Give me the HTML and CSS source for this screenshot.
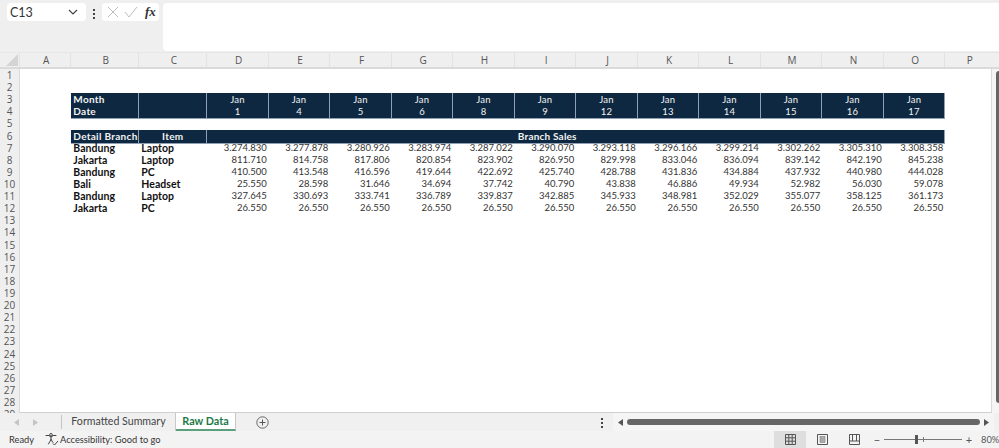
FILE: index.html
```html
<!DOCTYPE html>
<html lang="en">
<head>
<meta charset="utf-8">
<title>Raw Data</title>
<link rel="stylesheet" href="styles.css">
</head>
<body>
<div class="app">
  <div class="formula-bar">
    <div class="name-box"><span>C13</span>
      <svg width="10" height="6" viewBox="0 0 10 6"><path d="M1 1l4 4 4-4" fill="none" stroke="#444" stroke-width="1.2"/></svg>
    </div>
    <div class="dots"><i></i><i></i><i></i></div>
    <div class="fx-box">
      <svg width="12" height="12" viewBox="0 0 12 12"><path d="M1 1l10 10M11 1L1 11" stroke="#bdbdbd" stroke-width="1" fill="none"/></svg>
      <svg width="14" height="12" viewBox="0 0 14 12"><path d="M1 6l4 5 8-10" stroke="#bdbdbd" stroke-width="1" fill="none"/></svg>
      <span class="fx">fx</span>
    </div>
    <div class="formula-input"></div>
  </div>
  <div class="col-head">
    <div class="corner"><svg width="12" height="12" viewBox="0 0 12 12"><path d="M12 0v12H0z" fill="#d4d4d4"/></svg></div>
    <div class="col-a">A</div><div class="col-b">B</div><div class="col-b">C</div>
    <div class="col-d">D</div><div class="col-d">E</div><div class="col-d">F</div><div class="col-d">G</div><div class="col-d">H</div><div class="col-d">I</div><div class="col-d">J</div><div class="col-d">K</div><div class="col-d">L</div><div class="col-d">M</div><div class="col-d">N</div><div class="col-d">O</div>
    <div class="col-p">P</div>
  </div>
  <div class="body">
    <div class="row-head">
      <div>1</div><div>2</div><div>3</div><div>4</div><div>5</div><div>6</div><div>7</div><div>8</div><div>9</div><div>10</div><div>11</div><div>12</div><div>13</div><div>14</div><div>15</div><div>16</div><div>17</div><div>18</div><div>19</div><div>20</div><div>21</div><div>22</div><div>23</div><div>24</div><div>25</div><div>26</div><div>27</div><div>28</div><div>29</div>
    </div>
    <div class="sheet">
      <div class="blank"></div><div class="blank"></div>
      <div class="row head">
        <div class="b h">Month</div><div class="b h"></div>
        <div class="m">Jan</div><div class="m">Jan</div><div class="m">Jan</div><div class="m">Jan</div><div class="m">Jan</div><div class="m">Jan</div><div class="m">Jan</div><div class="m">Jan</div><div class="m">Jan</div><div class="m">Jan</div><div class="m">Jan</div><div class="m">Jan</div>
      </div>
      <div class="row head">
        <div class="b h">Date</div><div class="b h"></div>
        <div class="m">1</div><div class="m">4</div><div class="m">5</div><div class="m">6</div><div class="m">8</div><div class="m">9</div><div class="m">12</div><div class="m">13</div><div class="m">14</div><div class="m">15</div><div class="m">16</div><div class="m">17</div>
      </div>
      <div class="blank"></div>
      <div class="row head">
        <div class="b h">Detail Branch</div><div class="b h ctr">Item</div><div class="span">Branch Sales</div>
      </div>
      <div class="row"><div class="b">Bandung</div><div class="b">Laptop</div><div class="n">3.274.830</div><div class="n">3.277.878</div><div class="n">3.280.926</div><div class="n">3.283.974</div><div class="n">3.287.022</div><div class="n">3.290.070</div><div class="n">3.293.118</div><div class="n">3.296.166</div><div class="n">3.299.214</div><div class="n">3.302.262</div><div class="n">3.305.310</div><div class="n">3.308.358</div></div>
      <div class="row"><div class="b">Jakarta</div><div class="b">Laptop</div><div class="n">811.710</div><div class="n">814.758</div><div class="n">817.806</div><div class="n">820.854</div><div class="n">823.902</div><div class="n">826.950</div><div class="n">829.998</div><div class="n">833.046</div><div class="n">836.094</div><div class="n">839.142</div><div class="n">842.190</div><div class="n">845.238</div></div>
      <div class="row"><div class="b">Bandung</div><div class="b">PC</div><div class="n">410.500</div><div class="n">413.548</div><div class="n">416.596</div><div class="n">419.644</div><div class="n">422.692</div><div class="n">425.740</div><div class="n">428.788</div><div class="n">431.836</div><div class="n">434.884</div><div class="n">437.932</div><div class="n">440.980</div><div class="n">444.028</div></div>
      <div class="row"><div class="b">Bali</div><div class="b">Headset</div><div class="n">25.550</div><div class="n">28.598</div><div class="n">31.646</div><div class="n">34.694</div><div class="n">37.742</div><div class="n">40.790</div><div class="n">43.838</div><div class="n">46.886</div><div class="n">49.934</div><div class="n">52.982</div><div class="n">56.030</div><div class="n">59.078</div></div>
      <div class="row"><div class="b">Bandung</div><div class="b">Laptop</div><div class="n">327.645</div><div class="n">330.693</div><div class="n">333.741</div><div class="n">336.789</div><div class="n">339.837</div><div class="n">342.885</div><div class="n">345.933</div><div class="n">348.981</div><div class="n">352.029</div><div class="n">355.077</div><div class="n">358.125</div><div class="n">361.173</div></div>
      <div class="row"><div class="b">Jakarta</div><div class="b">PC</div><div class="n">26.550</div><div class="n">26.550</div><div class="n">26.550</div><div class="n">26.550</div><div class="n">26.550</div><div class="n">26.550</div><div class="n">26.550</div><div class="n">26.550</div><div class="n">26.550</div><div class="n">26.550</div><div class="n">26.550</div><div class="n">26.550</div></div>
    </div>
    <div class="vscroll">
      <svg width="7" height="5" viewBox="0 0 7 5"><path d="M3.5 0L7 5H0z" fill="#666"/></svg>
      <div class="vthumb"></div>
    </div>
  </div>
  <div class="tabs">
    <div class="nav">
      <svg width="5" height="7" viewBox="0 0 5 7"><path d="M5 0v7L0 3.5z" fill="#c4c4c4"/></svg>
      <svg width="5" height="7" viewBox="0 0 5 7"><path d="M0 0v7l5-3.5z" fill="#c4c4c4"/></svg>
    </div>
    <div class="tab">Formatted Summary</div>
    <div class="tab active">Raw Data</div>
    <div class="add"><svg width="13" height="13" viewBox="0 0 13 13"><circle cx="6.5" cy="6.5" r="5.7" fill="none" stroke="#666"/><path d="M6.5 3.5v6M3.5 6.5h6" stroke="#555"/></svg></div>
    <div class="dots tab-dots"><i></i><i></i><i></i></div>
    <div class="hscroll">
      <svg width="5" height="7" viewBox="0 0 5 7"><path d="M5 0v7L0 3.5z" fill="#555"/></svg>
      <div class="hthumb"></div>
      <svg width="5" height="7" viewBox="0 0 5 7"><path d="M0 0v7l5-3.5z" fill="#555"/></svg>
    </div>
  </div>
  <div class="status">
    <span class="ready">Ready</span>
    <svg class="acc" width="14" height="13" viewBox="0 0 14 13"><path d="M1 2.5h3.5a1.5 1.5 0 0 0 3 0H11M6 4v2.5M6 6.5L3.5 11M6 6.5L8 9.5" fill="none" stroke="#444" stroke-linecap="round"/><circle cx="6" cy="1.8" r="1.3" fill="none" stroke="#444"/><path d="M8 10.5l1.5 1.5L13 8" fill="none" stroke="#444"/></svg>
    <span class="acc-text">Accessibility: Good to go</span>
    <div class="views">
      <div class="view on"><svg width="11" height="11" viewBox="0 0 11 11"><path d="M.5.5h10v10H.5zM.5 3.8h10M.5 7.2h10M3.8.5v10M7.2.5v10" fill="none" stroke="#555"/></svg></div>
      <div class="view"><svg width="11" height="11" viewBox="0 0 11 11"><path d="M.5.5h10v10H.5z" fill="none" stroke="#555"/><rect x="3" y="2.5" width="5" height="6" fill="#aaa" stroke="#777" stroke-width=".5"/></svg></div>
      <div class="view"><svg width="11" height="11" viewBox="0 0 11 11"><path d="M.5.5h10v10H.5zM.5 7h10M3.5.5V7M7.5.5V7" fill="none" stroke="#555"/></svg></div>
    </div>
    <div class="zoom">
      <span class="pm">−</span>
      <div class="slider"><i class="tick"></i><i class="knob"></i></div>
      <span class="pm">+</span>
      <span class="pct">80%</span>
    </div>
  </div>
</div>
</body>
</html>
```

FILE: styles.css
```css
* { box-sizing: border-box; }
html, body { margin: 0; padding: 0; }
body { width: 999px; height: 448px; overflow: hidden; background: #efefef; font-family: Lato, "Open Sans", sans-serif; color: #222; }
.app { display: flex; flex-direction: column; height: 448px; }

.formula-bar { height: 52px; display: flex; align-items: flex-start; padding-top: 3px; padding-left: 7px; flex: none; }
.name-box { width: 79px; height: 18px; background: #fff; border-radius: 4px; display: flex; align-items: center; justify-content: space-between; padding: 0 8px 0 3px; font-size: 12.5px; color: #333; font-family: Lato, sans-serif; }
.dots { display: flex; flex-direction: column; gap: 2px; width: 2px; }
.dots i { width: 2px; height: 2px; background: #444; display: block; }
.formula-bar .dots { margin: 6px 7px 0 7px; }
.fx-box { width: 57px; height: 18px; background: #fff; border-radius: 4px; display: flex; align-items: center; gap: 5px; padding-left: 5px; }
.fx { font-family: "Liberation Serif", serif; font-style: italic; font-weight: 700; font-size: 13px; color: #333; margin-left: 2px; }
.formula-input { flex: 1; height: 48px; margin-left: 4px; background: #fff; border-radius: 4px 0 0 4px; }

.col-head { height: 17px; flex: none; display: flex; font-size: 10px; color: #555; background: #efefef; border-top: 1px solid #e6e6e6; border-bottom: 2px solid #dadada; font-family: "Open Sans", sans-serif; }
.col-head > div { display: flex; align-items: center; justify-content: center; padding-left: 2px; border-right: 1px solid #e2e2e2; }
.corner { width: 20px; justify-content: flex-end !important; align-items: flex-end !important; padding: 0 1px 1px 0 !important; }
.col-a { width: 51.3px; }
.col-b { width: 68px; }
.col-d { width: 61.5px; }
.col-p { width: 47px; border-right: 0 !important; }

.body { flex: 1; min-height: 0; display: flex; overflow: hidden; }
.row-head { width: 20px; flex: none; border-right: 1px solid #dadada; font-size: 10px; color: #555; font-family: "Open Sans", sans-serif; }
.row-head div { height: 12.12px; line-height: 12px; text-align: center; }
.sheet { width: 972px; flex: none; background: #fff; padding-left: 51.3px; border-right: 1px solid #dadada; border-bottom: 1px solid #d0d0d0; }
.blank { height: 12.12px; }
.row { height: 12.12px; display: grid; grid-template-columns: 68px 68px repeat(12, 61.5px); font-size: 10.5px; line-height: 12px; white-space: nowrap; }
.row > div { min-width: 0; }
.b { font-weight: 700; color: #111; padding-left: 2px; letter-spacing: 0.05px; }
.n { text-align: right; padding-right: 2px; color: #333; font-size: 9.5px; }
.head > div { background: #0e2841; color: #f2f2f2; border-right: 1px solid #8fa0b4; border-bottom: 1px solid #8fa0b4; }
.head .h { font-size: 10px; letter-spacing: 0.3px; line-height: 13px; }
.ctr { text-align: center; padding-left: 0; }
.m { text-align: center; font-weight: 400; font-size: 9.5px; letter-spacing: 0.3px; line-height: 13px; }
.span { grid-column: 3 / span 12; text-align: center; font-weight: 700; font-size: 10px; letter-spacing: 0.2px; padding-right: 57px; }

.vscroll { flex: 1; background: #f5f5f5; display: flex; flex-direction: column; align-items: flex-end; padding-top: 0; gap: 3px; overflow: hidden; }
.vscroll svg { margin-top: -6px; margin-right: -2px; flex: none; }
.vthumb { width: 3px; flex: 1; background: #666; border-radius: 3px 0 0 3px; margin-bottom: 10px; }

.tabs { height: 18px; flex: none; display: flex; align-items: stretch; background: #f0f0f0; font-size: 11px; font-family: Lato, sans-serif; }
.nav { width: 62px; display: flex; align-items: center; gap: 14px; padding-left: 14px; border-right: 1px solid #c4c4c4; margin: 2px 0; }
.tab { width: 114px; display: flex; align-items: center; justify-content: center; color: #444; border-right: 1px solid #c8c8c8; font-size: 10.6px; padding-bottom: 2px; white-space: nowrap; }
.tab.active { width: 60px; background: #fff; color: #1b7a48; font-weight: 700; font-size: 10.8px; border-bottom: 2px solid #5b9f7c; padding-bottom: 1px; }
.add { width: 36px; display: flex; align-items: center; justify-content: center; margin-left: 8px; }
.tab-dots { margin: 5px 0 0 321px; }
.hscroll { margin-left: 10px; width: 381px; display: flex; align-items: center; gap: 4px; padding: 0 5px; background: #f5f5f5; }
.hthumb { flex: 1; height: 6px; background: #666; border-radius: 3px; }

.status { height: 17px; flex: none; display: flex; align-items: center; background: #f3f3f3; font-size: 9.3px; color: #333; padding-left: 9px; font-family: Lato, sans-serif; white-space: nowrap; }
.ready { width: 36px; }
.acc { margin-right: 1px; flex: none; }
.views { display: flex; margin-left: auto; margin-right: 1px; align-self: stretch; }
.view { width: 32px; display: flex; align-items: center; justify-content: center; }
.view.on { background: #dedede; }
.zoom { width: 128px; flex: none; display: flex; align-items: center; padding-left: 1px; color: #555; }
.pm { width: 10px; flex: none; text-align: center; font-size: 11px; }
.slider { position: relative; width: 78px; flex: none; height: 1px; background: #777; margin: 0 2px; }
.tick { position: absolute; left: 39px; top: -2px; width: 1px; height: 5px; background: #777; }
.knob { position: absolute; left: 31px; top: -4px; width: 3px; height: 9px; background: #555; }
.pct { margin-left: 7px; }
```
